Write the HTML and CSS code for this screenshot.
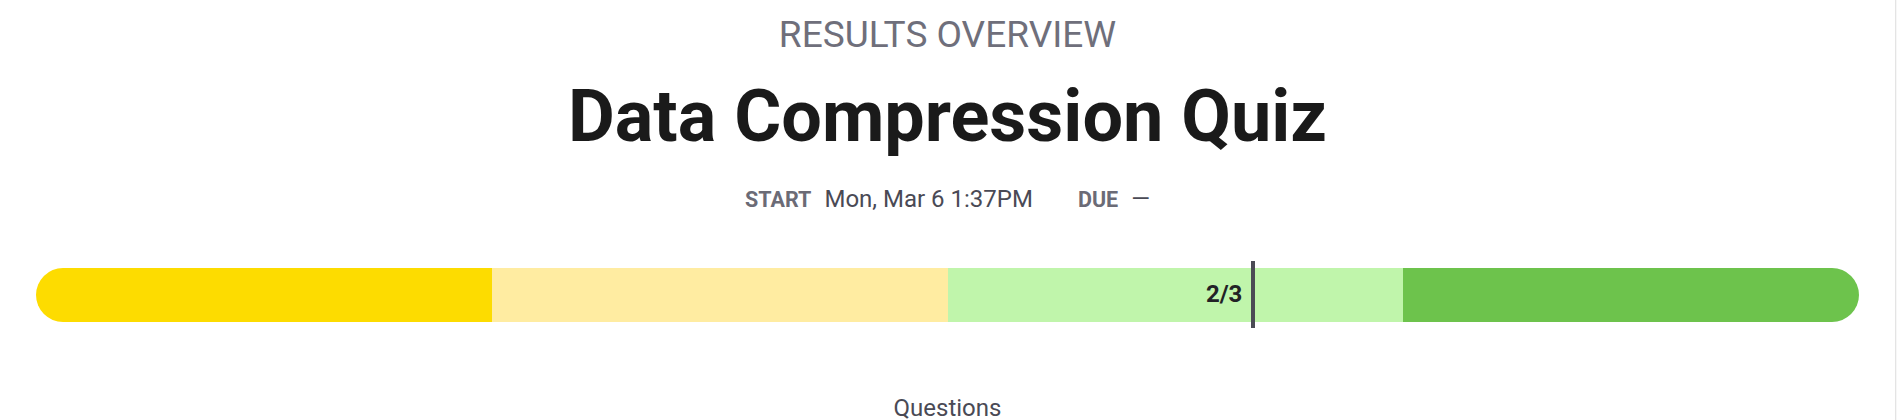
FILE: index.html
```html
<!DOCTYPE html>
<html lang="en">
<head>
<meta charset="utf-8">
<title>Results Overview</title>
<link rel="stylesheet" href="styles.css">
</head>
<body>
<div class="page">
  <main class="content">
    <header class="header">
      <div class="eyebrow">RESULTS OVERVIEW</div>
      <h1 class="title">Data Compression Quiz</h1>
      <div class="meta">
        <span class="meta-item"><span class="meta-label">START</span><span class="meta-value">Mon, Mar 6 1:37PM</span></span>
        <span class="meta-item"><span class="meta-label">DUE</span><span class="meta-value">—</span></span>
      </div>
    </header>
    <div class="progress">
      <div class="bar">
        <div class="seg seg-1"></div>
        <div class="seg seg-2"></div>
        <div class="seg seg-3"></div>
        <div class="seg seg-4"></div>
      </div>
      <div class="marker" style="left: 66.667%">
        <span class="marker-label">2/3</span>
      </div>
    </div>
    <div class="section-label">Questions</div>
  </main>
  <div class="scroll-edge"></div>
</div>
</body>
</html>
```

FILE: styles.css
```css
* { box-sizing: border-box; }
html, body { margin: 0; padding: 0; background: #ffffff; }
body {
  font-family: Roboto, "Liberation Sans", Arial, sans-serif;
  color: #1a1a1a;
  height: 420px;
  overflow: hidden;
}
.page {
  display: flex;
  height: 420px;
}
.content {
  flex: 1;
  display: flex;
  flex-direction: column;
  align-items: stretch;
  padding: 0 36px;
}
.scroll-edge {
  width: 2px;
  flex: none;
  background: #f7f7f7;
  border-left: 1px solid #e4e4e4;
}
.header {
  display: flex;
  flex-direction: column;
  align-items: center;
  padding-top: 14px;
}
.eyebrow {
  font-size: 37px;
  font-weight: 400;
  line-height: 42px;
  color: #6f6f7b;
}
.title {
  margin: 19px 0 0;
  font-size: 72px;
  font-weight: 700;
  line-height: 84px;
  color: #1a1a1a;
}
.meta {
  display: flex;
  gap: 45px;
  margin-top: 26px;
  font-size: 24px;
  line-height: 28px;
}
.meta-item {
  display: flex;
  align-items: baseline;
  gap: 13px;
}
.meta-label {
  font-weight: 700;
  font-size: 21.5px;
  color: #6b6b76;
}
.meta-value {
  color: #4a4a55;
}
.progress {
  position: relative;
  margin-top: 54px;
  height: 54px;
}
.bar {
  display: flex;
  height: 54px;
  border-radius: 27px;
  overflow: hidden;
}
.seg { flex: 1; }
.seg-1 { background: #fddc00; }
.seg-2 { background: #ffeca1; }
.seg-3 { background: #c0f5ab; }
.seg-4 { background: #6dc34c; }
.marker {
  position: absolute;
  top: -7px;
  width: 4px;
  height: 67px;
  background: #4b4b55;
}
.marker-label {
  position: absolute;
  right: 13px;
  top: 19px;
  font-size: 24px;
  font-weight: 700;
  line-height: 28px;
  color: #222226;
}
.section-label {
  margin-top: 72px;
  text-align: center;
  font-size: 24px;
  line-height: 28px;
  color: #4a4a55;
}
```
